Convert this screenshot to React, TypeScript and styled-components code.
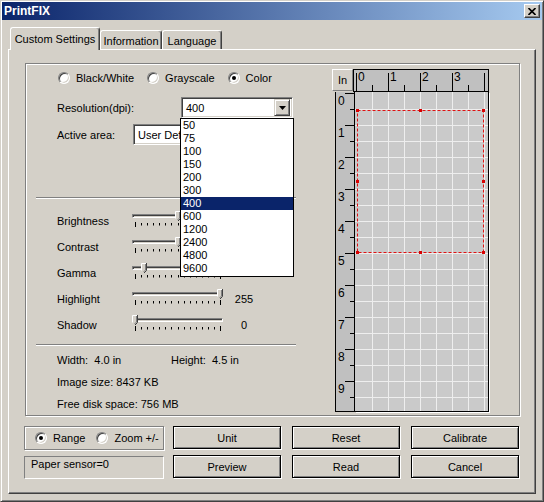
import React from "react";
import styled, { createGlobalStyle } from "styled-components";

const GlobalStyle = createGlobalStyle`
  html, body {
    margin: 0;
    padding: 0;
    background: #D4D0C8;
  }
  body {
    font-family: "Liberation Sans", Arial, sans-serif;
    font-size: 11px;
    color: #000;
  }
  * {
    box-sizing: border-box;
  }
`;

const Details = {
    Title: "PrintFIX",
    Tabs: [
        { Name: "Custom Settings", Width: 90, Active: true },
        { Name: "Information", Width: 62, Active: false },
        { Name: "Language", Width: 60, Active: false },
    ],
    Modes: [
        { Name: "Black/White", Checked: false },
        { Name: "Grayscale", Checked: false },
        { Name: "Color", Checked: true },
    ],
    Resolutions: ["50", "75", "100", "150", "200", "300", "400", "600", "1200", "2400", "4800", "9600"],
    Resolution: "400",
    Sliders: [
        { Name: "Brightness", Value: 0.5, Label: "0" },
        { Name: "Contrast", Value: 0.5, Label: "0" },
        { Name: "Gamma", Value: 0.1, Label: "1.0" },
        { Name: "Highlight", Value: 1, Label: "255" },
        { Name: "Shadow", Value: 0, Label: "0" },
    ],
    Buttons: ["Unit", "Reset", "Calibrate", "Preview", "Read", "Cancel"],
};

const Window = styled.div`
    width: 544px;
    height: 502px;
    display: flex;
    flex-direction: column;
    padding: 1px;
    background: #D4D0C8;
    border: 1px solid;
    border-color: #D4D0C8 #404040 #404040 #D4D0C8;
    box-shadow: inset 1px 1px #fff, inset -1px -1px #808080;
`;

const TitleBar = styled.div`
    height: 18px;
    flex: none;
    display: flex;
    align-items: center;
    justify-content: space-between;
    padding: 0 2px;
    background: linear-gradient(to right, #0A246A, #A6CAF0);
    color: #fff;
    font-weight: bold;
    font-size: 12px;
`;

const CloseButton = styled.div`
    width: 16px;
    height: 14px;
    display: flex;
    align-items: center;
    justify-content: center;
    background: #D4D0C8;
    border: 1px solid;
    border-color: #fff #404040 #404040 #fff;
    box-shadow: inset -1px -1px #808080;
`;

const Body = styled.div`
    flex: 1;
    display: flex;
    flex-direction: column;
    padding: 7px 6px 6px 6px;
`;

const TabRow = styled.div`
    height: 22px;
    flex: none;
    display: flex;
    align-items: flex-end;
    padding-left: 2px;
`;

const Tab = styled.div<{ $active: boolean; $w: number }>`
    width: ${p => p.$w}px;
    height: ${p => (p.$active ? 23 : 19)}px;
    margin-bottom: ${p => (p.$active ? -1 : 0)}px;
    padding-top: ${p => (p.$active ? 0 : 1)}px;
    position: relative;
    z-index: ${p => (p.$active ? 2 : 1)};
    display: flex;
    align-items: center;
    justify-content: center;
    white-space: nowrap;
    background: #D4D0C8;
    border-top: 1px solid #fff;
    border-left: 1px solid #fff;
    border-right: 1px solid #404040;
    border-radius: 3px 3px 0 0;
    box-shadow: inset -1px 0 #808080;
`;

const Panel = styled.div`
    flex: 1;
    display: flex;
    flex-direction: column;
    border: 1px solid;
    border-color: #fff #404040 #404040 #fff;
    box-shadow: inset -1px -1px #808080;
`;

const GroupBox = styled.div`
    margin: 13px 0 0 16px;
    width: 495px;
    height: 353px;
    display: flex;
    border: 1px solid #808080;
    box-shadow: inset 1px 1px #fff, 1px 1px #fff;
`;

const LeftCol = styled.div`
    width: 280px;
    display: flex;
    flex-direction: column;
`;

const RadioRow = styled.div`
    margin: 6px 0 0 32px;
    height: 16px;
    display: flex;
    align-items: center;
    gap: 13px;
`;

const RadioOption = styled.div`
    display: flex;
    align-items: center;
    gap: 6px;
    white-space: nowrap;
`;

const RadioCircle = styled.span<{ $checked: boolean }>`
    width: 12px;
    height: 12px;
    flex: none;
    border-radius: 50%;
    border: 1px solid;
    border-color: #808080 #fff #fff #808080;
    box-shadow: inset 1px 1px #404040, inset -1px -1px #D4D0C8;
    background: #fff;
    display: flex;
    align-items: center;
    justify-content: center;

    &::after {
        content: "";
        width: 4px;
        height: 4px;
        border-radius: 50%;
        background: ${p => (p.$checked ? "#000" : "transparent")};
    }
`;

const FieldRow = styled.div<{ $top: number }>`
    margin: ${p => p.$top}px 0 0 31px;
    height: 21px;
    display: flex;
    align-items: center;
`;

const FieldLabel = styled.span<{ $w: number }>`
    width: ${p => p.$w}px;
    flex: none;
`;

const Combo = styled.div<{ $w: number }>`
    position: relative;
    width: ${p => p.$w}px;
    height: 21px;
    flex: none;
    display: flex;
    align-items: center;
    padding: 2px;
    background: #fff;
    border: 1px solid;
    border-color: #808080 #fff #fff #808080;
    box-shadow: inset 1px 1px #404040, inset -1px -1px #D4D0C8;
`;

const ComboText = styled.span`
    flex: 1;
    padding-left: 2px;
    white-space: nowrap;
    overflow: hidden;
`;

const ComboButton = styled.div`
    width: 16px;
    height: 17px;
    flex: none;
    display: flex;
    align-items: center;
    justify-content: center;
    background: #D4D0C8;
    border: 1px solid;
    border-color: #D4D0C8 #404040 #404040 #D4D0C8;
    box-shadow: inset 1px 1px #fff, inset -1px -1px #808080;
`;

const DropList = styled.div`
    position: absolute;
    left: -2px;
    top: 20px;
    width: 114px;
    height: 159px;
    z-index: 10;
    background: #fff;
    border: 1px solid #000;
`;

const DropItem = styled.div<{ $selected: boolean }>`
    height: 13px;
    line-height: 13px;
    padding-left: 2px;
    background: ${p => (p.$selected ? "#0A246A" : "#fff")};
    color: ${p => (p.$selected ? "#fff" : "#000")};
`;

const Separator = styled.div<{ $top: number }>`
    margin: ${p => p.$top}px 0 0 10px;
    width: 260px;
    height: 2px;
    flex: none;
    border-top: 1px solid #808080;
    border-bottom: 1px solid #fff;
`;

const SliderList = styled.div`
    margin-top: 9px;
    display: flex;
    flex-direction: column;
`;

const SliderRow = styled.div`
    height: 26px;
    margin-left: 31px;
    display: flex;
    align-items: center;
`;

const SliderBox = styled.div`
    position: relative;
    width: 91px;
    height: 26px;
    align-self: flex-start;
`;

const Track = styled.div`
    margin-top: 6px;
    height: 4px;
    background: #D4D0C8;
    border: 1px solid;
    border-color: #808080 #fff #fff #808080;
    box-shadow: inset 1px 1px #404040;
`;

const TickRow = styled.svg`
    display: block;
    margin-top: 4px;
`;

const Thumb = styled.svg`
    position: absolute;
    top: 3px;
`;

const SliderValue = styled.span`
    width: 32px;
    margin-left: 5px;
    text-align: center;
`;

const InfoBlock = styled.div`
    margin-top: 3px;
    display: flex;
    flex-direction: column;
`;

const InfoRow = styled.div`
    height: 22px;
    margin-left: 31px;
    display: flex;
    align-items: center;
    white-space: pre;
`;

const InfoCell = styled.span`
    width: 114px;
`;

const RightCol = styled.div`
    margin: 5px 0 0 26px;
    display: flex;
    flex-direction: column;
`;

const RulerTop = styled.div`
    height: 23px;
    display: flex;
`;

const UnitBox = styled.div`
    width: 21px;
    height: 22px;
    display: flex;
    align-items: center;
    justify-content: center;
    background: #D4D0C8;
    border: 1px solid;
    border-color: #fff #808080 #808080 #fff;
`;

const TopRuler = styled.div`
    width: 136px;
    height: 23px;
    background: #C0C0C0;
    border: 1px solid #000;
`;

const RulerBottom = styled.div`
    margin-left: 3px;
    height: 320px;
    display: flex;
`;

const LeftRuler = styled.div`
    width: 20px;
    height: 320px;
    background: #C0C0C0;
    border: 1px solid #000;
    border-top: none;
`;

const Canvas = styled.div`
    width: 134px;
    height: 320px;
    background: #CACACA;
    border-right: 1px solid #000;
    border-bottom: 1px solid #000;
    box-shadow: 1px 1px #fff;
`;

const BottomRow = styled.div`
    margin: 10px 0 0 15px;
    display: flex;
    gap: 9px;
`;

const BottomLeft = styled.div`
    width: 140px;
    display: flex;
    flex-direction: column;
    gap: 6px;
`;

const RangeBox = styled.div`
    height: 24px;
    display: flex;
    align-items: center;
    gap: 11px;
    padding-left: 10px;
    border: 1px solid #808080;
    box-shadow: inset 1px 1px #fff, 1px 1px #fff;
`;

const StatusBox = styled.div`
    height: 23px;
    padding: 1px 6px;
    line-height: 13px;
    border: 1px solid;
    border-color: #808080 #fff #fff #808080;
`;

const ButtonGrid = styled.div`
    display: grid;
    grid-template-columns: repeat(3, 108px);
    grid-auto-rows: 23px;
    column-gap: 11px;
    row-gap: 6px;
`;

const Button = styled.button`
    padding: 0;
    font-family: inherit;
    font-size: 11px;
    color: #000;
    background: #D4D0C8;
    border: 1px solid #000;
    box-shadow: inset 1px 1px #fff, inset -1px -1px #808080, 1px 1px #fff;
`;

function Radio({ label, checked }: { label: string; checked: boolean }) {
    return (
        <RadioOption>
            <RadioCircle $checked={checked} />
            <span>{label}</span>
        </RadioOption>
    );
}

function Slider({ name, value, label }: { name: string; value: number; label: string }) {
    const ticks = Array.from({ length: 15 }, (_, k) => Math.round(3 + (k * 85) / 14) + 0.5);
    const pos = 3 + value * 85;
    return (
        <SliderRow>
            <FieldLabel $w={75}>{name}</FieldLabel>
            <SliderBox>
                <Track />
                <TickRow width="91" height="5">
                    {ticks.map((x, k) => {
                        const end = k === 0 || k === ticks.length - 1;
                        return <line key={k} x1={x} x2={x} y1={end ? 0 : 1} y2={end ? 5 : 3.5} stroke="#000" />;
                    })}
                </TickRow>
                <Thumb width="6" height="10" style={{ left: Math.round(pos - 3) }}>
                    <path d="M0 0H6V7.5L3 10L0 7.5Z" fill="#D4D0C8" />
                    <path d="M0.5 7.5V0.5H5" stroke="#fff" fill="none" />
                    <path d="M5.5 0V7.5L3 10" stroke="#404040" fill="none" />
                    <path d="M4.5 1V7L2.5 9" stroke="#808080" fill="none" />
                </Thumb>
            </SliderBox>
            <SliderValue>{label}</SliderValue>
        </SliderRow>
    );
}

function TopScale() {
    const majors = [0, 1, 2, 3, 4];
    const halves = [0, 1, 2, 3];
    return (
        <svg width="134" height="21" style={{ display: "block" }}>
            {majors.map(k => (
                <g key={k}>
                    <line x1={2.5 + 32 * k} x2={2.5 + 32 * k} y1={3} y2={21} stroke="#000" />
                    {k < 4 && (
                        <text x={4 + 32 * k} y={11} fontSize="12" fontFamily="Liberation Sans, Arial, sans-serif">
                            {k}
                        </text>
                    )}
                </g>
            ))}
            {halves.map(k => (
                <line key={k} x1={18.5 + 32 * k} x2={18.5 + 32 * k} y1={15} y2={21} stroke="#000" />
            ))}
        </svg>
    );
}

function LeftScale() {
    const ks = Array.from({ length: 10 }, (_, k) => k);
    return (
        <svg width="18" height="319" style={{ display: "block" }}>
            {ks.map(k => (
                <g key={k}>
                    <line x1={9} x2={18} y1={1.5 + 32 * k} y2={1.5 + 32 * k} stroke="#000" />
                    <line x1={14} x2={18} y1={17.5 + 32 * k} y2={17.5 + 32 * k} stroke="#000" />
                    <text x={2} y={13 + 32 * k} fontSize="12" fontFamily="Liberation Sans, Arial, sans-serif">
                        {k}
                    </text>
                </g>
            ))}
        </svg>
    );
}

function PreviewGrid() {
    const cols = Array.from({ length: 8 }, (_, k) => 17.5 + 16 * k);
    const rows = Array.from({ length: 19 }, (_, k) => 17.5 + 16 * k);
    const handles = [
        [2, 18], [65, 18], [128, 18],
        [2, 89], [128, 89],
        [2, 160], [65, 160], [128, 160],
    ];
    return (
        <svg width="133" height="319" style={{ display: "block" }}>
            {cols.map(x => (
                <line key={"c" + x} x1={x} x2={x} y1={0} y2={319} stroke="#EEEEEE" />
            ))}
            {rows.map(y => (
                <line key={"r" + y} x1={0} x2={133} y1={y} y2={y} stroke="#EEEEEE" />
            ))}
            <rect x={2.5} y={18.5} width={126} height={142} fill="none" stroke="#E01010" strokeDasharray="3 2" />
            {handles.map(([x, y], i) => (
                <rect key={i} x={x - 1} y={y - 1} width={3} height={3} fill="#D80000" />
            ))}
        </svg>
    );
}

export default function App() {
    return (
        <>
            <GlobalStyle />
            <Window>
                <TitleBar>
                    <span>{Details.Title}</span>
                    <CloseButton>
                        <svg width="8" height="7" viewBox="0 0 8 7">
                            <path d="M0.5 0L7.5 7M7.5 0L0.5 7" stroke="#000" strokeWidth="1.6" />
                        </svg>
                    </CloseButton>
                </TitleBar>
                <Body>
                    <TabRow>
                        {Details.Tabs.map(tab => (
                            <Tab key={tab.Name} $active={tab.Active} $w={tab.Width}>
                                {tab.Name}
                            </Tab>
                        ))}
                    </TabRow>
                    <Panel>
                        <GroupBox>
                            <LeftCol>
                                <RadioRow>
                                    {Details.Modes.map(mode => (
                                        <Radio key={mode.Name} label={mode.Name} checked={mode.Checked} />
                                    ))}
                                </RadioRow>
                                <FieldRow $top={11}>
                                    <FieldLabel $w={124}>Resolution(dpi):</FieldLabel>
                                    <Combo $w={112}>
                                        <ComboText>{Details.Resolution}</ComboText>
                                        <ComboButton>
                                            <svg width="7" height="4">
                                                <polygon points="0,0 7,0 3.5,4" fill="#000" />
                                            </svg>
                                        </ComboButton>
                                        <DropList>
                                            {Details.Resolutions.map(r => (
                                                <DropItem key={r} $selected={r === Details.Resolution}>
                                                    {r}
                                                </DropItem>
                                            ))}
                                        </DropList>
                                    </Combo>
                                </FieldRow>
                                <FieldRow $top={6}>
                                    <FieldLabel $w={76}>Active area:</FieldLabel>
                                    <Combo $w={160}>
                                        <ComboText>User Defined</ComboText>
                                        <ComboButton>
                                            <svg width="7" height="4">
                                                <polygon points="0,0 7,0 3.5,4" fill="#000" />
                                            </svg>
                                        </ComboButton>
                                    </Combo>
                                </FieldRow>
                                <Separator $top={52} />
                                <SliderList>
                                    {Details.Sliders.map(s => (
                                        <Slider key={s.Name} name={s.Name} value={s.Value} label={s.Label} />
                                    ))}
                                </SliderList>
                                <Separator $top={6} />
                                <InfoBlock>
                                    <InfoRow>
                                        <InfoCell>Width:  4.0 in</InfoCell>
                                        <span>Height:  4.5 in</span>
                                    </InfoRow>
                                    <InfoRow>Image size: 8437 KB</InfoRow>
                                    <InfoRow>Free disk space: 756 MB</InfoRow>
                                </InfoBlock>
                            </LeftCol>
                            <RightCol>
                                <RulerTop>
                                    <UnitBox>In</UnitBox>
                                    <TopRuler>
                                        <TopScale />
                                    </TopRuler>
                                </RulerTop>
                                <RulerBottom>
                                    <LeftRuler>
                                        <LeftScale />
                                    </LeftRuler>
                                    <Canvas>
                                        <PreviewGrid />
                                    </Canvas>
                                </RulerBottom>
                            </RightCol>
                        </GroupBox>
                        <BottomRow>
                            <BottomLeft>
                                <RangeBox>
                                    <Radio label="Range" checked={true} />
                                    <Radio label="Zoom +/-" checked={false} />
                                </RangeBox>
                                <StatusBox>Paper sensor=0</StatusBox>
                            </BottomLeft>
                            <ButtonGrid>
                                {Details.Buttons.map(b => (
                                    <Button key={b}>{b}</Button>
                                ))}
                            </ButtonGrid>
                        </BottomRow>
                    </Panel>
                </Body>
            </Window>
        </>
    );
}
